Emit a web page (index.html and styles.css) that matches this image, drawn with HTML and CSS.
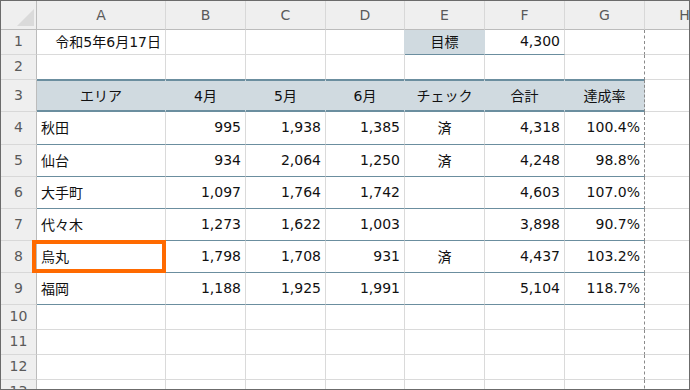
FILE: index.html
```html
<!DOCTYPE html>
<html lang="ja">
<head>
    <meta charset="UTF-8">
    <title>達成率</title>
    <link rel="stylesheet" href="styles.css">
</head>
<body>
    <div class="sheet">
        <!-- column headers -->
        <div class="corner"><span class="tri"></span></div>
        <div class="hd">A</div>
        <div class="hd">B</div>
        <div class="hd">C</div>
        <div class="hd">D</div>
        <div class="hd">E</div>
        <div class="hd">F</div>
        <div class="hd">G</div>
        <div class="hd">H</div>

        <!-- row 1 -->
        <div class="rh">1</div>
        <div class="c num">令和5年6月17日</div>
        <div class="c"></div>
        <div class="c"></div>
        <div class="c before-fill"></div>
        <div class="c ctr fill line">目標</div>
        <div class="c num line">4,300</div>
        <div class="c pb"></div>
        <div class="c"></div>

        <!-- row 2 -->
        <div class="rh">2</div>
        <div class="c top"></div>
        <div class="c top"></div>
        <div class="c top"></div>
        <div class="c top"></div>
        <div class="c top"></div>
        <div class="c top"></div>
        <div class="c top pb"></div>
        <div class="c"></div>

        <!-- row 3 : table header -->
        <div class="rh">3</div>
        <div class="c ctr th">エリア</div>
        <div class="c ctr th">4月</div>
        <div class="c ctr th">5月</div>
        <div class="c ctr th">6月</div>
        <div class="c ctr th">チェック</div>
        <div class="c ctr th">合計</div>
        <div class="c ctr th pb">達成率</div>
        <div class="c"></div>

        <div class="rh">4</div>
        <div class="c tb">秋田</div>
        <div class="c tb num">995</div>
        <div class="c tb num">1,938</div>
        <div class="c tb num">1,385</div>
        <div class="c tb ctr">済</div>
        <div class="c tb num">4,318</div>
        <div class="c tb num pb">100.4%</div>
        <div class="c"></div>

        <div class="rh">5</div>
        <div class="c tb">仙台</div>
        <div class="c tb num">934</div>
        <div class="c tb num">2,064</div>
        <div class="c tb num">1,250</div>
        <div class="c tb ctr">済</div>
        <div class="c tb num">4,248</div>
        <div class="c tb num pb">98.8%</div>
        <div class="c"></div>

        <div class="rh">6</div>
        <div class="c tb">大手町</div>
        <div class="c tb num">1,097</div>
        <div class="c tb num">1,764</div>
        <div class="c tb num">1,742</div>
        <div class="c tb ctr"></div>
        <div class="c tb num">4,603</div>
        <div class="c tb num pb">107.0%</div>
        <div class="c"></div>

        <div class="rh">7</div>
        <div class="c tb">代々木</div>
        <div class="c tb num">1,273</div>
        <div class="c tb num">1,622</div>
        <div class="c tb num">1,003</div>
        <div class="c tb ctr"></div>
        <div class="c tb num">3,898</div>
        <div class="c tb num pb">90.7%</div>
        <div class="c"></div>

        <div class="rh">8</div>
        <div class="c tb selected">烏丸</div>
        <div class="c tb num">1,798</div>
        <div class="c tb num">1,708</div>
        <div class="c tb num">931</div>
        <div class="c tb ctr">済</div>
        <div class="c tb num">4,437</div>
        <div class="c tb num pb">103.2%</div>
        <div class="c"></div>

        <div class="rh">9</div>
        <div class="c tb">福岡</div>
        <div class="c tb num">1,188</div>
        <div class="c tb num">1,925</div>
        <div class="c tb num">1,991</div>
        <div class="c tb ctr"></div>
        <div class="c tb num">5,104</div>
        <div class="c tb num pb">118.7%</div>
        <div class="c"></div>

        <div class="rh">10</div>
        <div class="c"></div><div class="c"></div><div class="c"></div><div class="c"></div>
        <div class="c"></div><div class="c"></div><div class="c pb"></div><div class="c"></div>

        <div class="rh">11</div>
        <div class="c"></div><div class="c"></div><div class="c"></div><div class="c"></div>
        <div class="c"></div><div class="c"></div><div class="c pb"></div><div class="c"></div>

        <div class="rh">12</div>
        <div class="c"></div><div class="c"></div><div class="c"></div><div class="c"></div>
        <div class="c"></div><div class="c"></div><div class="c pb"></div><div class="c"></div>

        <div class="rh">13</div>
        <div class="c"></div><div class="c"></div><div class="c"></div><div class="c"></div>
        <div class="c"></div><div class="c"></div><div class="c pb"></div><div class="c"></div>
    </div>
</body>
</html>
```

FILE: styles.css
```css
body {
    margin: 0;
    padding: 0;
    background: #ffffff;
    font-family: "DejaVu Sans", "Noto Sans CJK JP", sans-serif;
    font-size: 14px;
    color: #111;
}

.sheet {
    width: 690px;
    height: 390px;
    box-sizing: border-box;
    border: 1px solid #6b6b6b;
    overflow: hidden;
    display: grid;
    grid-template-columns: 36px 129px 80px 80px 79px 80px 80px 80px 80px;
    grid-template-rows: 29px 25px 25px 32px 33px 32px 32px 32px 32px 32px 25px 25px 25px 25px;
}

.sheet > div {
    box-sizing: border-box;
    display: flex;
    align-items: center;
    white-space: nowrap;
}

/* headers */
.corner {
    background: #efefef;
    border-right: 1px solid #bcbcbc;
    border-bottom: 1px solid #bcbcbc;
    position: relative;
}

.tri {
    position: absolute;
    right: 2px;
    bottom: 3px;
    width: 0;
    height: 0;
    border-left: 17px solid transparent;
    border-bottom: 17px solid #dadada;
}

.hd {
    background: #efefef;
    color: #5a5a5a;
    justify-content: center;
    border-right: 1px solid #d8d8d8;
    border-bottom: 1px solid #bcbcbc;
    font-size: 14px;
    padding-bottom: 1px;
}

.rh {
    background: #efefef;
    color: #5a5a5a;
    justify-content: center;
    border-right: 1px solid #bcbcbc;
    border-bottom: 1px solid #d8d8d8;
    padding-bottom: 2px;
}

/* cells */
.c {
    border-right: 1px solid #dadada;
    border-bottom: 1px solid #dadada;
    padding: 0 4px 2px;
}

.num {
    justify-content: flex-end;
}

.ctr {
    justify-content: center;
}

.fill {
    background: #d0dae0;
    border-right-color: #d0dae0 !important;
}

.before-fill {
    border-right-color: #d0dae0;
}

.line {
    border-bottom: 1px solid #6b8e9f;
}

.top {
    border-bottom-color: #6b8e9f;
}

.th {
    background: #d0dae0;
    border-right-color: #d0dae0;
    border-bottom: 1px solid #6b8e9f;
    box-shadow: inset 0 1px 0 #6b8e9f, inset 0 -1px 0 #6b8e9f;
}

.tb {
    border-bottom-color: #6b8e9f;
}

/* page break line after column G */
.pb {
    border-right: 1px dashed #8a8a8a !important;
}

/* active cell highlight */
.selected {
    position: relative;
    overflow: visible;
}

.selected::after {
    content: '';
    position: absolute;
    left: -5px;
    top: -1px;
    right: -1px;
    bottom: -1px;
    border: 4px solid #ff6a00;
    z-index: 2;
}
```
